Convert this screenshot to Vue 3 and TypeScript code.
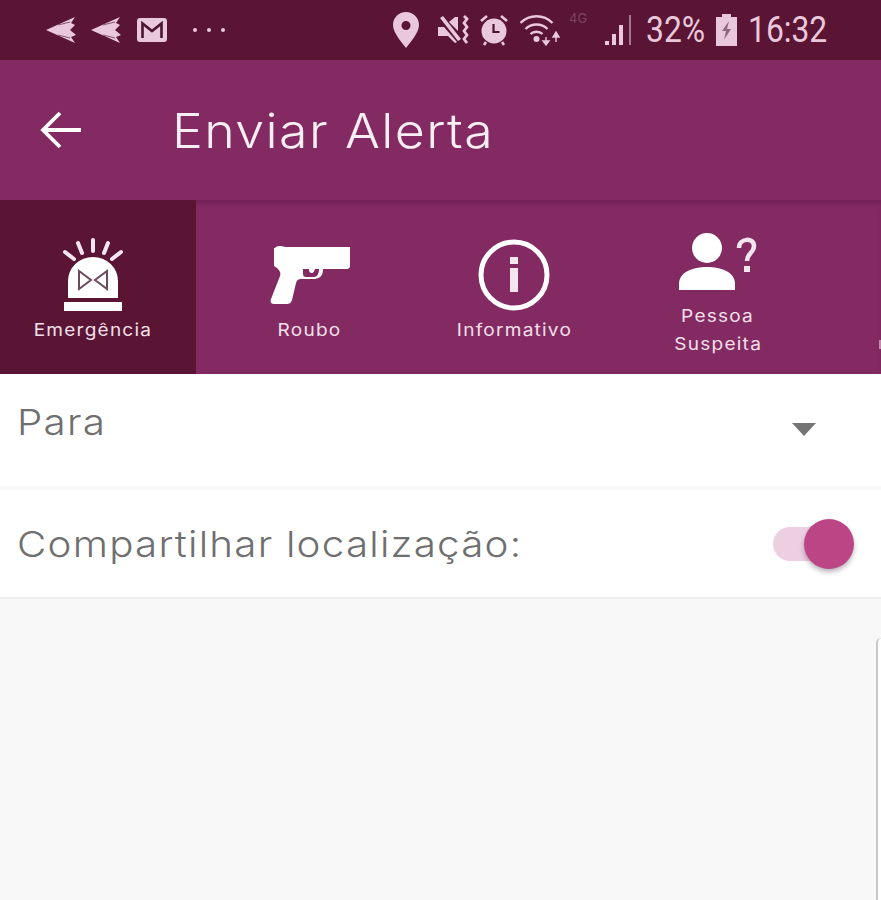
<script setup lang="ts">
import { ref } from 'vue'

type AlertTab = { id: string; lines: string[]; icon: string }

const tabs: AlertTab[] = [
  { id: 'emergency', lines: ['Emergência'], icon: 'siren' },
  { id: 'theft', lines: ['Roubo'], icon: 'gun' },
  { id: 'info', lines: ['Informativo'], icon: 'info' },
  { id: 'suspect', lines: ['Pessoa', 'Suspeita'], icon: 'person' }
]

const active = ref('emergency')
const shareLocation = ref(true)
</script>

<template>
  <div class="screen">
    <div class="status">
      <div class="status-left">
        <svg class="ic-send" viewBox="0 0 32 28">
          <path d="M0 14 29 1l-4 6 4 2-5 5 6 5-5 2 4 6Z" />
          <path d="M12 9 24 6M12 19l12 3" stroke="#8a5a74" stroke-width="1.200" fill="none" />
        </svg>
        <svg class="ic-send" viewBox="0 0 32 28">
          <path d="M0 14 29 1l-4 6 4 2-5 5 6 5-5 2 4 6Z" />
          <path d="M12 9 24 6M12 19l12 3" stroke="#8a5a74" stroke-width="1.200" fill="none" />
        </svg>
        <svg class="ic-mail" viewBox="0 0 30 26">
          <rect x="0" y="1" width="30" height="24" rx="3" />
          <path d="M5.500 21V6.500L15 14l9.500-7.500V21" fill="none" stroke="#4a1530" stroke-width="2.600" />
        </svg>
        <span class="dots"><i></i><i></i><i></i></span>
      </div>
      <div class="status-right">
        <svg class="ic-pin" viewBox="0 0 26 36">
          <path fill-rule="evenodd" d="M13 0C5.800 0 0 5.600 0 13c0 8 9 17.500 13 23 4-5.500 13-15 13-23C26 5.600 20.200 0 13 0Zm0 9a4.500 4.500 0 1 1 0 9 4.500 4.500 0 0 1 0-9Z" />
        </svg>
        <svg class="ic-mute" viewBox="0 0 33 30">
          <path d="M1 12h6l13 15-2 1-7-7H1Z" />
          <path d="M3 3l3-2 18 23-3 2Z" />
          <path d="M12 7l6-5h3v14Z" />
          <path d="M27 1l3 3-3 4 3 4-3 4 3 4-3 4 3 4" fill="none" stroke="#e9c8dc" stroke-width="2.800" />
        </svg>
        <svg class="ic-alarm" viewBox="0 0 28 32">
          <circle cx="14" cy="17" r="12.500" />
          <path d="M1 7 7 2M27 7l-6-5M6 28l-2 3M22 28l2 3" stroke="#e9c8dc" stroke-width="2.600" fill="none" />
          <path d="M13.500 10v8h6" fill="none" stroke="#4a1530" stroke-width="2.200" />
        </svg>
        <svg class="ic-wifi" viewBox="0 0 40 32">
          <g fill="none" stroke="#e9c8dc" stroke-width="2.400">
            <path d="M0.500 9c9-9 23-9 32 0" />
            <path d="M5.500 15c6-6 16-6 22 0" />
            <path d="M10.500 20c3-3 9-3 12 0" />
          </g>
          <circle cx="16.500" cy="25" r="3" />
          <path d="M26 23v5M23 27h6l-3 4Z M36 28v-6M33 23h6l-3-5Z" stroke="#e9c8dc" stroke-width="1.400" />
        </svg>
        <span class="net">4G</span>
        <svg class="ic-signal" viewBox="0 0 28 32">
          <rect x="0" y="27" width="4" height="4" />
          <rect x="7" y="20" width="4" height="11" />
          <rect x="14" y="11" width="4" height="20" />
          <rect x="24" y="1" width="2" height="30" opacity=".55" />
        </svg>
        <span class="pct">32%</span>
        <svg class="ic-batt" viewBox="0 0 21 32">
          <path d="M6 0h9v3h6v29H0V3h6Z" />
          <path d="M13 7 6 17h4l-2 9 7-11h-4Z" fill="#8f6880" />
        </svg>
        <span class="clock">16:32</span>
      </div>
    </div>

    <header class="bar">
      <svg class="back" viewBox="0 0 44 38">
        <path d="M20 2 3 19l17 17M3 19h38" fill="none" stroke="#fff" stroke-width="3.800" />
      </svg>
      <h1>Enviar Alerta</h1>
    </header>

    <nav class="tabs">
      <button
        v-for="t in tabs"
        :key="t.id"
        class="tab"
        :class="{ on: active === t.id }"
        @click="active = t.id"
      >
        <span class="tab-icon" :class="{ tall: t.lines.length > 1 }">
          <svg v-if="t.icon === 'siren'" width="62" height="74" viewBox="0 0 62 74">
            <g stroke="#f4e6ee" stroke-width="4" stroke-linecap="round">
              <path d="M31 2v11M16 5l4 10M46 5l-4 10M3 14l9 7M59 14l-9 7" />
            </g>
            <path d="M6 60V43a25 24 0 0 1 50 0v17Z" fill="#fff" />
            <path d="M17 33v18l12-9ZM45 33v18l-12-9Z" fill="none" stroke="#6e4a5e" stroke-width="2" />
            <rect x="2" y="64" width="58" height="9" fill="#fff" />
          </svg>
          <svg v-else-if="t.icon === 'gun'" width="80" height="60" viewBox="0 0 80 60">
            <path
              fill-rule="evenodd"
              d="M5 3c1-2 6-3 10-1h65v20l-2 2H53c0 8-4 9-8 10H31c-3 0-4 1-5 4l-4 17c-1 3-3 4-5 4H4c-3 0-4-2-3-5l9-23c1-3 0-5-3-8L4 21V3Zm28 21v5c0 2 1 3 3 3h8c3 0 5-3 5-8h-4c-1 3-2 4-3 4-2 0-3-1-3-4Z"
              fill="#fff"
            />
          </svg>
          <svg v-else-if="t.icon === 'info'" width="72" height="72" viewBox="0 0 72 72">
            <circle cx="36" cy="36" r="33" fill="none" stroke="#fff" stroke-width="5" />
            <rect x="32" y="18" width="8" height="7" fill="#f4e6ee" />
            <rect x="32" y="29" width="8" height="24" fill="#f4e6ee" />
          </svg>
          <svg v-else width="80" height="58" viewBox="0 0 80 58">
            <circle cx="29" cy="15" r="15" fill="#fff" />
            <path d="M1 57V51c0-12 14-17 28-17s28 5 28 17v6Z" fill="#fff" />
            <path d="M61 15c0-10 15-11 15-2 0 7-7 7-7 15" fill="none" stroke="#f4e6ee" stroke-width="4.500" />
            <rect x="66" y="33" width="6" height="6" fill="#f4e6ee" />
          </svg>
        </span>
        <span class="tab-label" v-for="l in t.lines" :key="l">{{ l }}</span>
      </button>
    </nav>

    <div class="row first">
      <span class="label">Para</span>
      <span class="caret"></span>
    </div>
    <div class="row second">
      <span class="label">Compartilhar localização:</span>
      <button class="switch" :class="{ off: !shareLocation }" @click="shareLocation = !shareLocation">
        <span class="knob"></span>
      </button>
    </div>

    <div class="rest">
      <div class="card"></div>
    </div>
  </div>
</template>

<style scoped>
.screen {
  width: 881px;
  height: 900px;
  display: flex;
  flex-direction: column;
  overflow: hidden;
  background: #f8f8f8;
  font-family: Inter, "Liberation Sans", sans-serif;
}

.status {
  height: 60px;
  flex: none;
  display: flex;
  align-items: center;
  justify-content: space-between;
  padding: 0 53px 0 46px;
  background: #5a1534;
  color: #e9c8dc;
  box-sizing: border-box;
}
.status svg { fill: #e9c8dc; display: block; flex: none; }
.status-left { display: flex; align-items: center; gap: 13px; }
.status-right { display: flex; align-items: center; }
.ic-send { width: 32px; height: 28px; }
.ic-mail { width: 30px; height: 26px; margin-left: 1px; }
.dots { display: flex; gap: 10px; margin-left: 13px; }
.dots i { width: 4px; height: 4px; border-radius: 50%; background: #e9c8dc; }
.ic-pin { width: 26px; height: 36px; margin-right: 18px; }
.ic-mute { width: 33px; height: 30px; margin-right: 10px; }
.ic-alarm { width: 28px; height: 32px; margin-right: 12px; }
.ic-wifi { width: 40px; height: 32px; margin-right: 9px; }
.net {
  font-size: 13px;
  color: #7d4560;
  margin: -24px 13px 0 0;
  width: 23px;
}
.ic-signal { width: 28px; height: 32px; margin-right: 13px; }
.pct, .clock {
  font-family: Roboto, sans-serif;
  font-size: 37px;
  line-height: 40px;
  transform: scaleX(0.86);
  transform-origin: left center;
  white-space: nowrap;
}
.pct { width: 60px; }
.ic-batt { width: 21px; height: 32px; margin: 0 11px 0 10px; }
.clock { width: 80px; }

.bar {
  height: 140px;
  flex: none;
  display: flex;
  align-items: center;
  background: #832a62;
}
.back { width: 44px; height: 38px; margin-left: 40px; flex: none; }
.bar h1 {
  margin: 0 0 0 88px;
  font-size: 48px;
  font-weight: 300;
  color: #f7eef3;
  letter-spacing: 1.300px;
  white-space: nowrap;
  transform: scaleX(1.08);
  transform-origin: left center;
}

.tabs {
  position: relative;
  height: 174px;
  flex: none;
  display: flex;
  background: #832a62;
  box-shadow: inset 0 5px 6px -3px rgba(60, 10, 40, 0.35);
}
/* first letter of the next tab, cut off by the screen edge */
.tabs::after {
  content: "";
  position: absolute;
  right: 0;
  top: 140px;
  width: 2px;
  height: 9px;
  background: rgba(244, 224, 234, 0.55);
}
.tab {
  width: 204px;
  flex: none;
  padding: 0;
  border: 0;
  background: transparent;
  display: flex;
  flex-direction: column;
  align-items: center;
  font-family: inherit;
  color: #f4e0ea;
  box-sizing: border-box;
}
.tab.on {
  width: 196px;
  margin-right: 12px;
  padding-right: 10px;
  background: #5a1534;
}
.tab-icon {
  height: 74px;
  margin: 38px 0 4px;
  display: flex;
  align-items: center;
  justify-content: center;
}
.tab-icon.tall { margin: 33px 0 11px; height: 58px; }
.tab-label {
  font-size: 17px;
  line-height: 28px;
  letter-spacing: 1.100px;
  white-space: nowrap;
  transform: scaleX(1.12);
}

.row {
  flex: none;
  display: flex;
  align-items: center;
  justify-content: space-between;
  padding-left: 17px;
  background: #fff;
  box-sizing: border-box;
}
.row.first { height: 112px; padding-bottom: 16px; }
.row.second {
  height: 109px;
  margin-top: 4px;
  border-bottom: 2px solid #efefef;
}
.label {
  font-size: 36px;
  font-weight: 300;
  letter-spacing: 1.100px;
  color: #6f6f6f;
  white-space: nowrap;
  transform: scaleX(1.12);
  transform-origin: left center;
}
.caret {
  width: 0;
  height: 0;
  margin: 14px 65px 0 0;
  border-left: 12px solid transparent;
  border-right: 12px solid transparent;
  border-top: 13px solid #757575;
}
.switch {
  position: relative;
  width: 62px;
  height: 34px;
  margin-right: 46px;
  padding: 0;
  border: 0;
  border-radius: 17px;
  background: #eccfe0;
}
.knob {
  position: absolute;
  top: -8px;
  right: -19px;
  width: 50px;
  height: 50px;
  border-radius: 50%;
  background: #bb4585;
  box-shadow: 0 3px 5px rgba(60, 40, 60, 0.35);
}
.switch.off { background: #ddd; }
.switch.off .knob { right: auto; left: -8px; background: #f4f4f4; }

.rest {
  flex: 1;
  padding: 39px 0 0 876px;
  background: #f8f8f8;
}
.card {
  height: 100%;
  border-left: 2px solid #c9c9c9;
  border-top: 1px solid #e4e4e4;
  border-top-left-radius: 10px;
  background: #fff;
}
</style>
